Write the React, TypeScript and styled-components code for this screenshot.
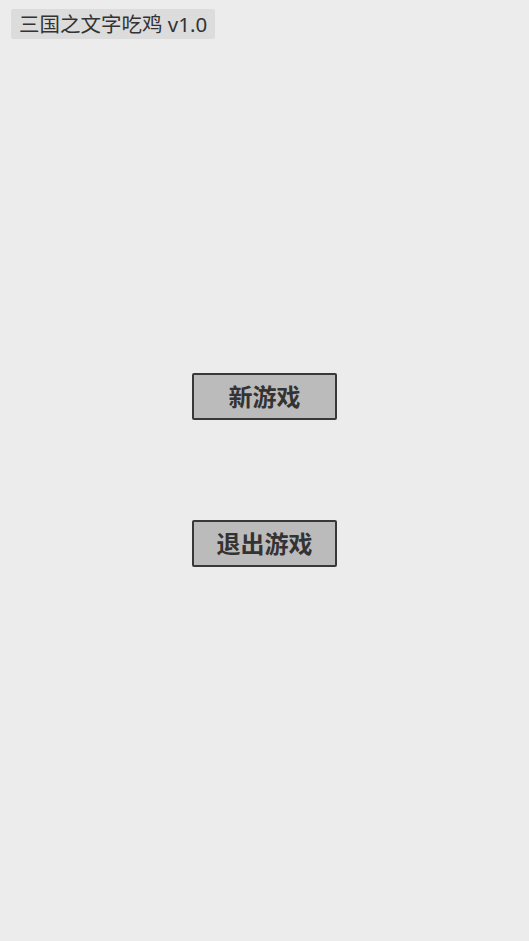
import React from 'react';
import styled, { createGlobalStyle } from 'styled-components';

const GlobalStyle = createGlobalStyle`
  html, body {
    margin: 0;
    padding: 0;
    background: #ececec;
  }
  body {
    font-family: "Noto Sans", "Noto Sans CJK SC", sans-serif;
  }
`;

const Page = styled.div`
  height: 941px;
  display: flex;
  flex-direction: column;
  align-items: flex-start;
  box-sizing: border-box;
  padding: 9px 0 0 11px;
`;

const TitleTag = styled.div`
  background: #dcdcdc;
  color: #333;
  font-size: 20.5px;
  line-height: 30px;
  height: 30px;
  padding: 0 8px;
  border-radius: 2px;
  white-space: nowrap;
`;

const Menu = styled.div`
  flex: 1;
  align-self: stretch;
  margin-left: -11px;
  padding-bottom: 41px;
  display: flex;
  flex-direction: column;
  align-items: center;
  justify-content: center;
  gap: 100px;
`;

const MenuButton = styled.button`
  width: 145px;
  height: 47px;
  box-sizing: border-box;
  border: 2px solid #383838;
  border-radius: 2px;
  background: #bbbbbc;
  color: #333;
  font-family: "Noto Sans", "Noto Sans CJK SC", sans-serif;
  font-weight: 700;
  font-size: 24px;
  padding: 0 0 2px;
  cursor: pointer;
`;

export default function App() {
  return (
    <>
      <GlobalStyle />
      <Page>
        <TitleTag>三国之文字吃鸡 v1.0</TitleTag>
        <Menu>
          <MenuButton>新游戏</MenuButton>
          <MenuButton>退出游戏</MenuButton>
        </Menu>
      </Page>
    </>
  );
}
